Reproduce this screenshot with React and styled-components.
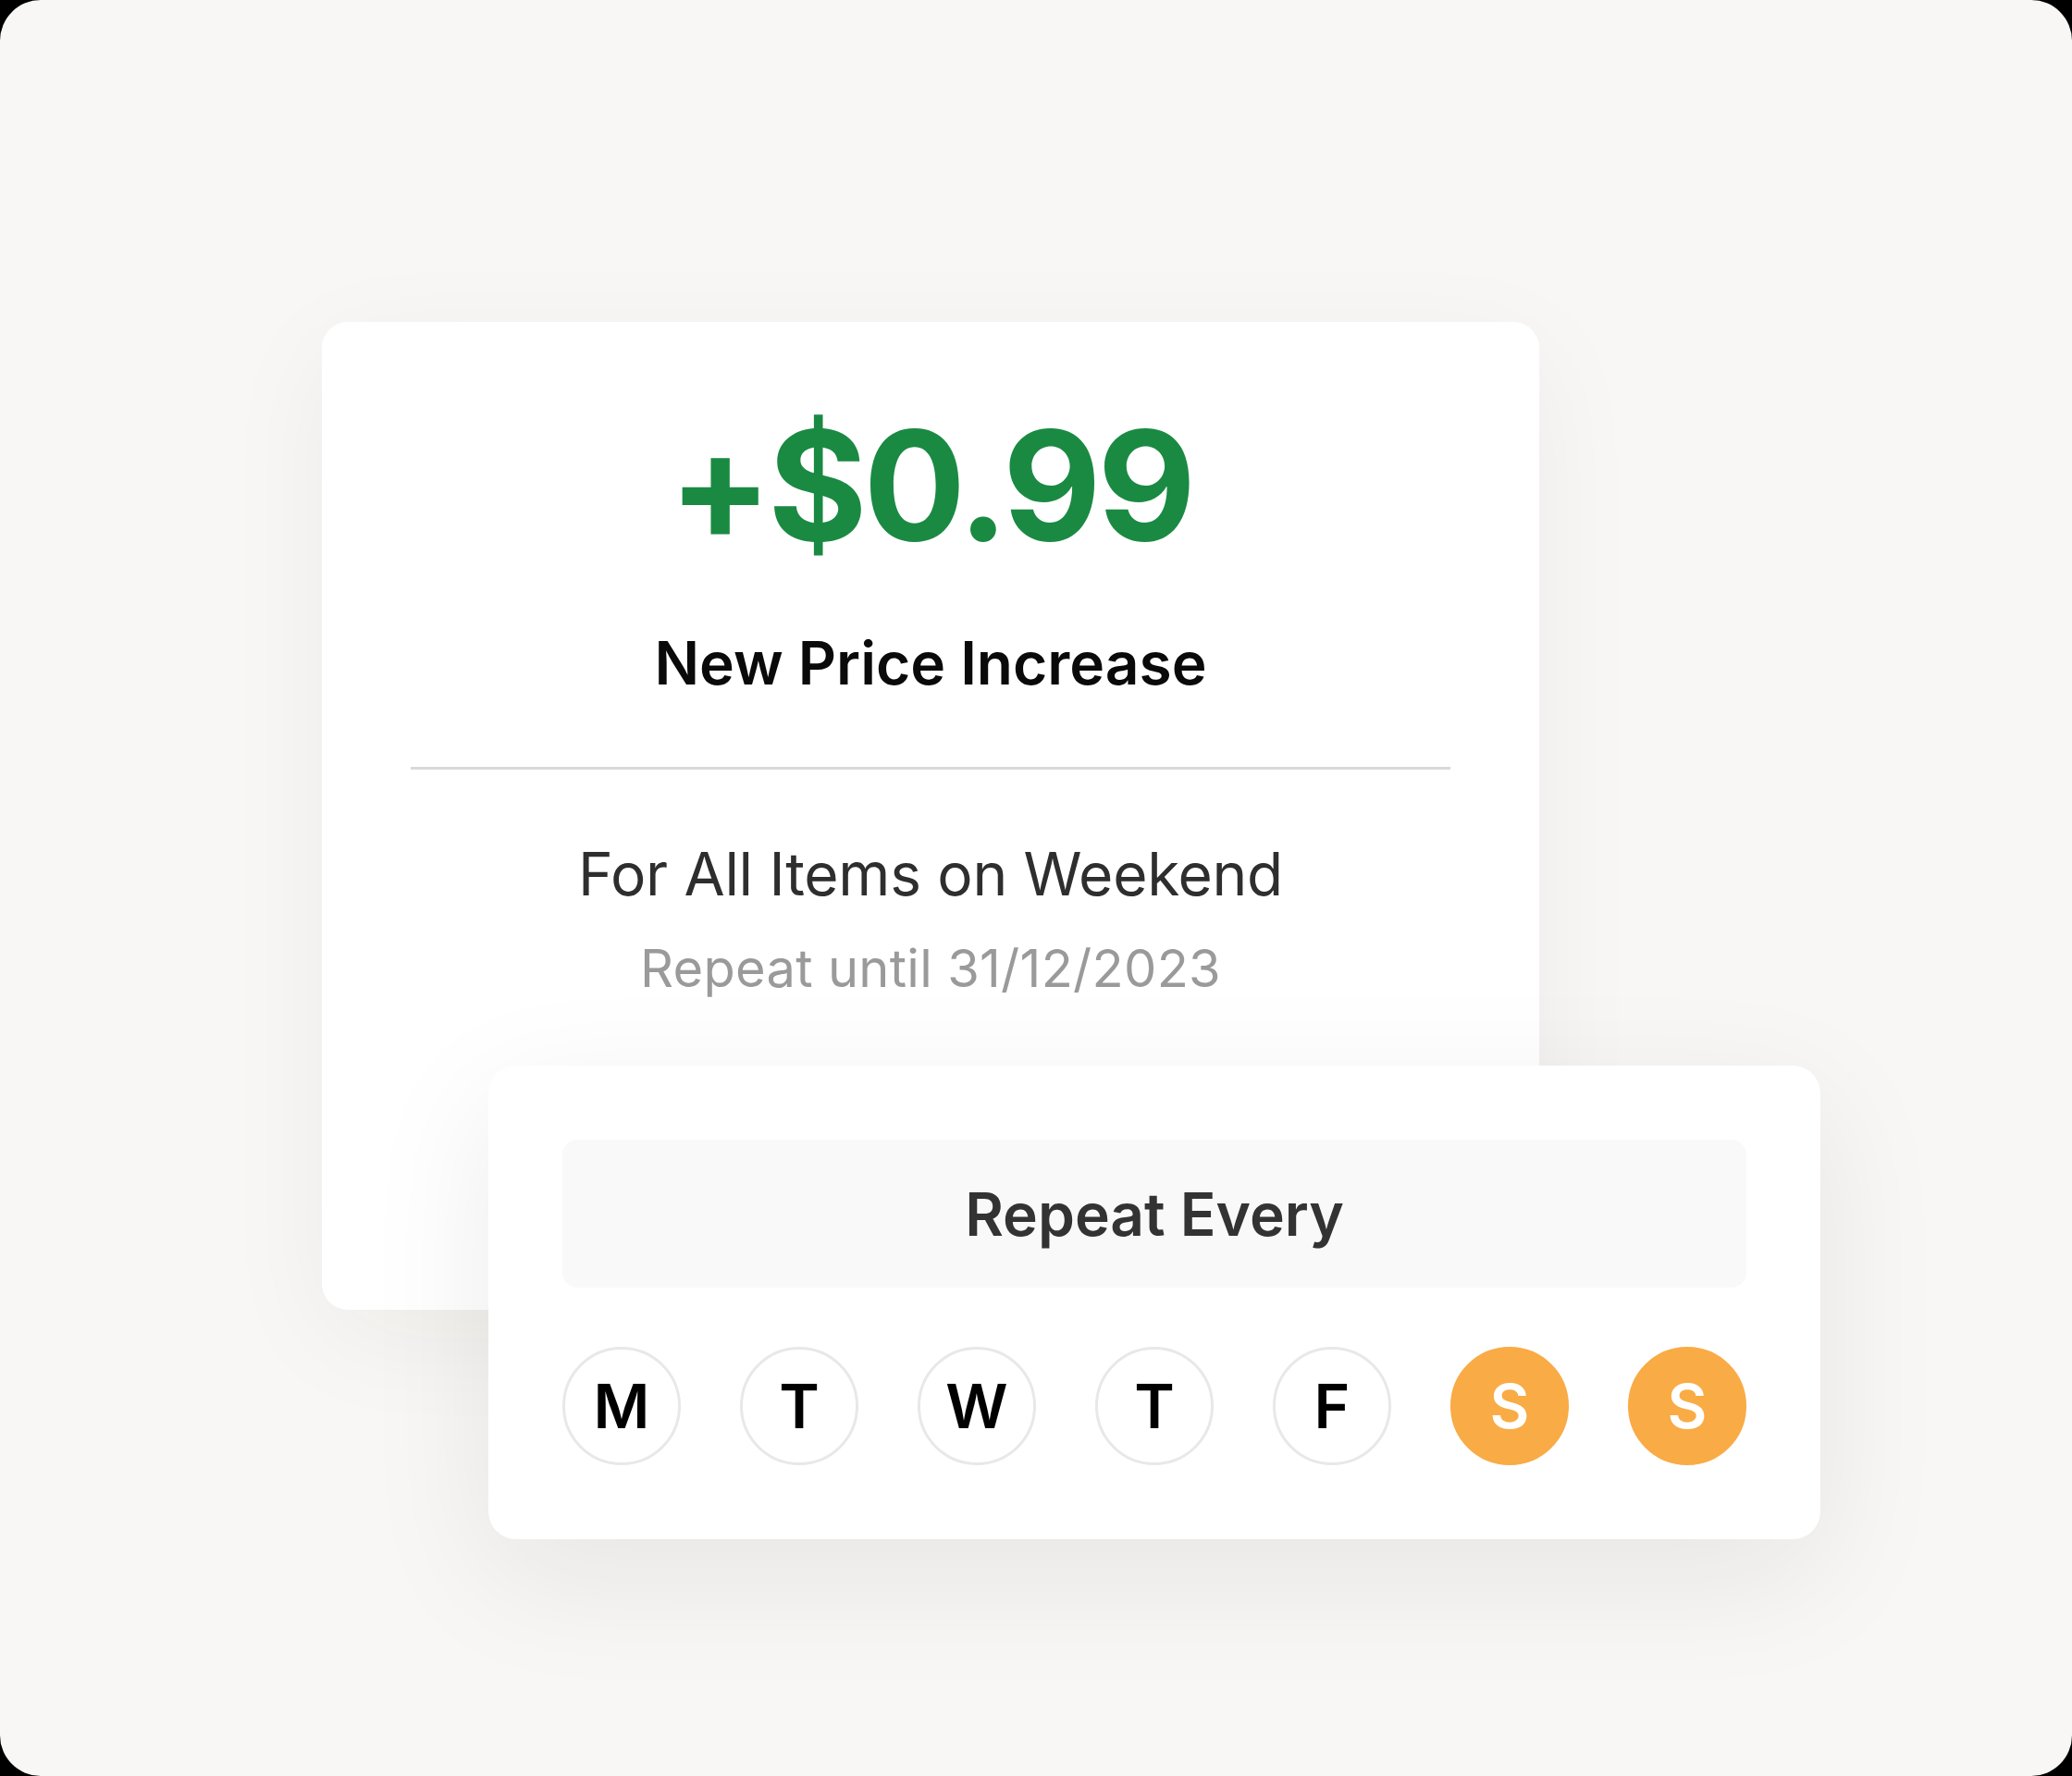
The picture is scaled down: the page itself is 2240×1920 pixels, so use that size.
import styled, { createGlobalStyle } from "styled-components";

const GlobalStyle = createGlobalStyle`
  body {
    margin: 0;
    background: #000;
    font-family: Inter, "Noto Sans", sans-serif;
  }
`;

const Frame = styled.div`
  width: 2240px;
  height: 1920px;
  box-sizing: border-box;
  background: #f8f7f5;
  border-radius: 44px;
  padding: 348px 0 0 348px;
  overflow: hidden;
`;

const Stage = styled.div`
  display: grid;
  align-items: start;
  justify-items: start;

  & > * {
    grid-area: 1 / 1;
  }
`;

const PriceCard = styled.div`
  width: 1316px;
  height: 1068px;
  box-sizing: border-box;
  background: #fff;
  border-radius: 28px;
  padding: 87px 96px 0;
  display: flex;
  flex-direction: column;
  align-items: center;
  box-shadow: 0 30px 120px rgba(40, 30, 20, 0.05);
`;

const Amount = styled.div`
  font-size: 164px;
  line-height: 180px;
  font-weight: 700;
  color: #1a8a43;
  letter-spacing: -4px;
`;

const Title = styled.div`
  margin-top: 62px;
  font-size: 64px;
  line-height: 80px;
  font-weight: 600;
  color: #0a0a0a;
`;

const Divider = styled.hr`
  align-self: stretch;
  margin: 72px 0 0;
  border: 0;
  height: 3px;
  background: #d9d9d9;
`;

const Subtitle = styled.div`
  margin-top: 73px;
  font-size: 64px;
  line-height: 80px;
  font-weight: 400;
  color: #2e2e2e;
  letter-spacing: -0.3px;
`;

const Note = styled.div`
  margin-top: 26px;
  font-size: 56px;
  line-height: 72px;
  font-weight: 400;
  color: #9a9a9a;
  letter-spacing: 0.3px;
`;

const ScheduleCard = styled.div`
  margin: 804px 0 0 180px;
  width: 1440px;
  box-sizing: border-box;
  padding: 80px;
  background: #fff;
  border-radius: 30px;
  display: flex;
  flex-direction: column;
  gap: 64px;
  box-shadow: 0 40px 140px rgba(40, 30, 20, 0.08);
`;

const RepeatHeader = styled.div`
  height: 160px;
  border-radius: 16px;
  background: #f9f9f9;
  display: flex;
  align-items: center;
  justify-content: center;
  font-size: 64px;
  font-weight: 600;
  color: #333;
`;

const DayRow = styled.div`
  display: flex;
  gap: 64px;
`;

const Day = styled.div`
  width: 128px;
  height: 128px;
  box-sizing: border-box;
  border-radius: 50%;
  display: flex;
  align-items: center;
  justify-content: center;
  font-size: 66px;
  font-weight: 600;
  border: 3px solid ${(p) => (p.$active ? "#f9ab45" : "#e8e8e8")};
  background: ${(p) => (p.$active ? "#f9ab45" : "#fff")};
  color: ${(p) => (p.$active ? "#fff" : "#000")};
`;

const days = [
  { label: "M" },
  { label: "T" },
  { label: "W" },
  { label: "T" },
  { label: "F" },
  { label: "S", active: true },
  { label: "S", active: true },
];

export default function App() {
  return (
    <>
      <GlobalStyle />
      <Frame>
        <Stage>
          <PriceCard>
            <Amount>+$0.99</Amount>
            <Title>New Price Increase</Title>
            <Divider />
            <Subtitle>For All Items on Weekend</Subtitle>
            <Note>Repeat until 31/12/2023</Note>
          </PriceCard>
          <ScheduleCard>
            <RepeatHeader>Repeat Every</RepeatHeader>
            <DayRow>
              {days.map((d, i) => (
                <Day key={i} $active={d.active}>
                  {d.label}
                </Day>
              ))}
            </DayRow>
          </ScheduleCard>
        </Stage>
      </Frame>
    </>
  );
}
